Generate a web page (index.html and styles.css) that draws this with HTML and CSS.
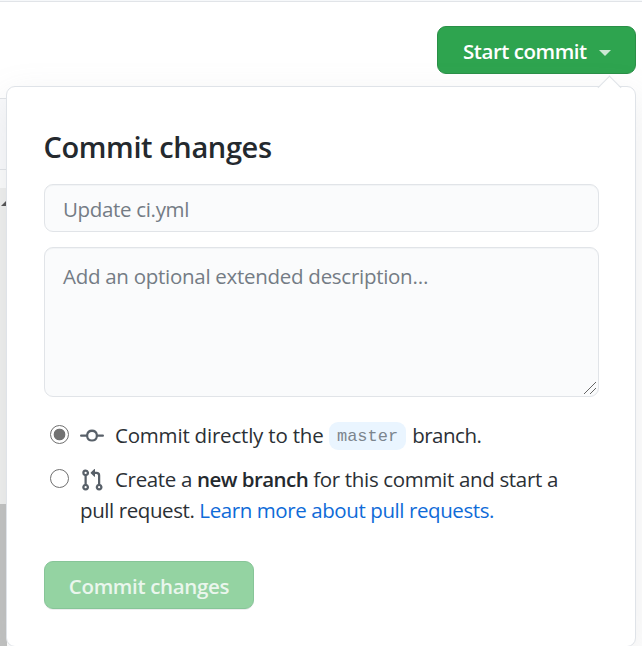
FILE: index.html
```html
<!DOCTYPE html>
<html lang="en">
<head>
<meta charset="utf-8">
<title>Commit changes</title>
<link rel="stylesheet" href="styles.css">
</head>
<body>
<div class="editor-edge"><div class="toolbar"></div><div class="gap"></div><div class="track"><svg width="6" height="6" viewBox="0 0 6 6"><path d="M6 0v5H1z" fill="#505050"/></svg></div><div class="thumb"></div></div>
<header class="actions">
  <button class="btn start"><span class="start-label">Start commit</span><span class="caret"></span></button>
</header>
<form class="popover">
  <h1><span>Commit changes</span></h1>
  <input class="field message" type="text" placeholder="Update ci.yml" aria-label="Commit message">
  <div class="area-wrap">
    <textarea class="field area" placeholder="Add an optional extended description…" aria-label="Description"></textarea>
    <svg class="grip" width="14" height="14" viewBox="0 0 14 14"><path d="M1 13L13 1M7 13l6-6" stroke="#555" stroke-width=".9" fill="none"/></svg>
  </div>
  <label class="choice first">
    <span class="radio checked"></span>
    <svg class="icon commit" width="24" height="24" viewBox="0 0 16 16"><path fill-rule="evenodd" d="M10.5 7.75a2.5 2.5 0 11-5 0 2.5 2.5 0 015 0zm1.43.75a4.002 4.002 0 01-7.86 0H.75a.75.75 0 110-1.5h3.32a4.001 4.001 0 017.86 0h3.32a.75.75 0 110 1.5h-3.32z"/></svg>
    <span class="copy"><span class="direct">Commit directly to the</span><code>master</code><span class="branch">branch.</span></span>
  </label>
  <label class="choice second">
    <span class="radio"></span>
    <svg class="icon pull" width="24" height="24" viewBox="0 0 16 16"><path fill-rule="evenodd" d="M7.177 3.073L9.573.677A.25.25 0 0110 .854v4.792a.25.25 0 01-.427.177L7.177 3.427a.25.25 0 010-.354zM3.75 2.5a.75.75 0 100 1.5.75.75 0 000-1.5zm-2.25.75a2.25 2.25 0 113 2.122v5.256a2.251 2.251 0 11-1.5 0V5.372A2.25 2.25 0 011.5 3.25zM11 2.5h-1V4h1a1 1 0 011 1v5.628a2.251 2.251 0 101.5 0V5A2.5 2.5 0 0011 2.5zm1 10.25a.75.75 0 111.5 0 .75.75 0 01-1.5 0zM3.75 12a.75.75 0 100 1.5.75.75 0 000-1.5z"/></svg>
    <span class="copy create">Create a <b>new branch</b> for this commit and start a</span>
  </label>
  <p class="more"><span>pull request. <a>Learn more about pull requests.</a></span></p>
  <button class="btn submit" type="button" disabled><span>Commit changes</span></button>
</form>
</body>
</html>
```
FILE: styles.css
```css
* { box-sizing: border-box; }
body {
  margin: 0;
  height: 646px;
  overflow: hidden;
  position: relative;
  background: #fff;
  border-top: 1px solid #f6f8fa;
  color: #2b3035;
  font: 20.5px/30px "Open Sans", "Noto Sans", sans-serif;
  white-space: nowrap;
}
body::before { content: ""; display: block; height: 1px; background: #e1e4e8; }
.editor-edge { position: absolute; top: 97px; left: 0; width: 7px; z-index: -1; }
.toolbar { height: 72px; background: #f9fafc; border: solid #e1e4e8; border-width: 1px 0; }
.gap { height: 18px; background: #fbfcfc; }
.track { height: 316px; padding-top: 11px; background: #eeefee; line-height: 0; }
.thumb { height: 146px; background: #c1c2c1; }
.actions { display: flex; justify-content: flex-end; padding: 24px 6px 0 0; }
.btn {
  display: flex;
  align-items: center;
  height: 48px;
  border: 1px solid #2a8f47;
  border-radius: 9px;
  background: #2ea44f;
  color: #fff;
  font: 600 20.5px/30px "Open Sans", "Noto Sans", sans-serif;
  white-space: nowrap;
}
.start { width: 199px; padding: 2px 24px 0 25px; justify-content: space-between; }
.start-label { letter-spacing: -.46px; }
.caret { border: 6px solid transparent; border-top-color: #cbe8d3; border-bottom: 0; margin-top: 3px; }
.popover {
  position: relative;
  width: 630px;
  height: 561px;
  margin: 12px 0 0 6px;
  padding: 42px 36px 0 37px;
  border: 1px solid #dfe3e8;
  border-radius: 9px;
  background: #fff;
  box-shadow: 0 12px 36px rgba(140,145,150,.17);
}
.popover::before {
  content: "";
  position: absolute;
  top: -8px;
  right: 17px;
  width: 16px;
  height: 16px;
  border: solid #dfe3e8;
  border-width: 1px 0 0 1px;
  background: linear-gradient(135deg, #fff 50%, transparent 50%);
  transform: rotate(45deg);
}
h1 { margin: 0 0 19px -.5px; color: #24292e; font-size: 29px; line-height: 36px; font-weight: 600; letter-spacing: -.38px; }
.field {
  display: block;
  width: 100%;
  height: 48px;
  padding: 2px 18px 0;
  border: 1px solid #e1e4e8;
  border-radius: 9px;
  background: #fafbfc;
  box-shadow: inset 0 1px 0 rgba(225,228,232,.3);
  font: inherit;
  letter-spacing: -.28px;
  outline: 0;
}
.message { letter-spacing: -.33px; }
.field::placeholder { color: #747c85; opacity: 1; }
.area-wrap { position: relative; margin-top: 15px; }
.area { height: 150px; padding-top: 13px; resize: none; }
.grip { position: absolute; right: 2px; bottom: 2px; }
.choice { display: flex; align-items: center; height: 30px; padding-left: 6px; }
.first { margin-top: 23px; }
.second { margin-top: 14px; }
.radio { flex: none; width: 19px; height: 19px; border: 1px solid #707070; border-radius: 50%; background: #fff; margin-bottom: 2px; }
.checked { background: radial-gradient(circle, #737373 5.5px, #fff 6.2px); }
.icon { flex: none; margin: 0 11px; fill: #586069; }
.pull, .commit { position: relative; top: 1px; }
.copy { display: flex; align-items: center; white-space: pre; }
.direct { letter-spacing: -.2px; }
.branch { letter-spacing: -.5px; }
.create { letter-spacing: -.33px; }
code {
  height: 28px;
  margin: 2px 6px 0 5.5px;
  padding: 0 8px;
  border-radius: 9px;
  background: #eaf5ff;
  color: #7c858e;
  font: 17px/30px "Liberation Mono", monospace;
}
b { color: #24292e; font-weight: 600; letter-spacing: -.55px; }
.more { margin: 1px 0 0 36px; letter-spacing: -.41px; }
a { color: #0f6bd8; }
.submit { width: 210px; margin-top: 36px; padding: 2px 0 0; justify-content: center; background: #94d3a2; border-color: #87c598; color: #eaf6ed; letter-spacing: -.33px; box-shadow: 0 1px 0 rgba(27,31,35,.08); }
```
